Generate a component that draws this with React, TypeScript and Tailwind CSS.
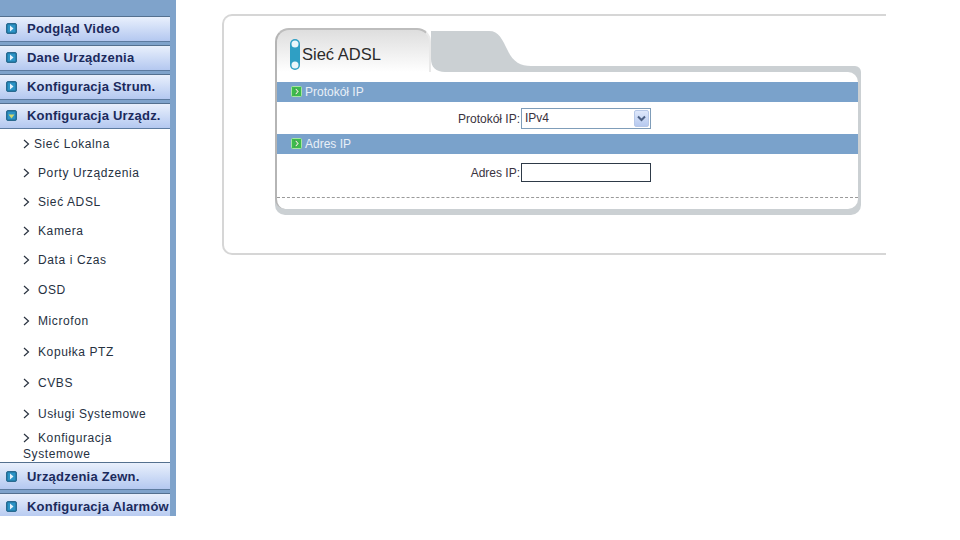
const menuTop = ["Podgląd Video", "Dane Urządzenia", "Konfiguracja Strum."];
const subItems = [
  { label: "Sieć Lokalna", gap: "mr-[4px]", h: "h-[29px]" },
  { label: "Porty Urządzenia", gap: "mr-[8px]", h: "h-[29px]" },
  { label: "Sieć ADSL", gap: "mr-[8px]", h: "h-[29px]" },
  { label: "Kamera", gap: "mr-[8px]", h: "h-[29px]" },
  { label: "Data i Czas", gap: "mr-[8px]", h: "h-[29px]" },
  { label: "OSD", gap: "mr-[8px]", h: "h-[31px]" },
  { label: "Microfon", gap: "mr-[8px]", h: "h-[31px]" },
  { label: "Kopułka PTZ", gap: "mr-[8px]", h: "h-[31px]" },
  { label: "CVBS", gap: "mr-[8px]", h: "h-[31px]" },
  { label: "Usługi Systemowe", gap: "mr-[8px]", h: "h-[31px]" },
];

const Chevron = ({ className }: { className: string }) => (
  <svg width="7" height="10" viewBox="0 0 7 10" className={className}>
    <path d="M1 1l4.5 4L1 9" fill="none" stroke="#2a3340" strokeWidth="1.2" />
  </svg>
);

const MenuIcon = ({ open }: { open?: boolean }) => (
  <svg width="11" height="11" viewBox="0 0 11 11" className="shrink-0 -mt-[2px]">
    <rect x="0.5" y="0.5" width="10" height="10" rx="1.5" fill="#1c6a94" stroke="#2a6a90" />
    <rect x="1.5" y="1.5" width="8" height="8" fill="#2b93c6" />
    {open ? (
      <path d="M2.5 4.5h6L5.5 8.5z" fill="#d2d86c" />
    ) : (
      <path d="M4 2.5l3.5 3L4 8.5z" fill="#e6f3fb" />
    )}
  </svg>
);

const MenuItem = ({ label, open, h }: { label: string; open?: boolean; h: string }) => (
  <div
    className={`${h} flex items-center pl-[6px] gap-[10px] w-[170px] bg-gradient-to-b from-[#e9f0fc] to-[#b4c8f0] border-t border-t-[#54708f] border-b border-b-[#5d7ba0] overflow-hidden`}
  >
    <MenuIcon open={open} />
    <span className="text-[13px] font-bold tracking-[0.22px] text-[#1b2a5c] whitespace-nowrap">{label}</span>
  </div>
);

const SectionBar = ({ title }: { title: string }) => (
  <div className="h-[20px] bg-[#7aa2cb] flex items-center pl-[14px] gap-[3px]">
    <svg width="11" height="11" viewBox="0 0 11 11" className="shrink-0 -mt-[2px]">
      <rect x="0.5" y="0.5" width="10" height="10" rx="1" fill="#3dbb4c" stroke="#a6e6a2" />
      <path d="M3.5 2.5h2l2.5 3-2.5 3h-2l2.5-3z" fill="#eef9dc" stroke="#1d7a2e" strokeWidth="0.5" />
    </svg>
    <span className="text-[12px] text-[#e8eff7]">{title}</span>
  </div>
);

export default function App() {
  return (
    <div className="w-[960px] h-[540px] bg-white flex items-start font-['Liberation_Sans',Arial,sans-serif] overflow-hidden">
      <aside className="w-[176px] h-[516px] shrink-0 bg-[#7fa3cb] pt-[16px] overflow-hidden">
        <div className="flex flex-col gap-[3px]">
          {menuTop.map((label) => (
            <MenuItem key={label} label={label} h="h-[26px]" />
          ))}
          <MenuItem label="Konfiguracja Urządz." open h="h-[26px]" />
        </div>
        <div className="w-[170px] h-[333px] bg-white text-[12px] tracking-[0.6px] text-[#26313f] pl-[23px]">
          {subItems.map((item) => (
            <div key={item.label} className={`${item.h} flex items-center whitespace-nowrap`}>
              <Chevron className={`${item.gap} shrink-0`} />
              <span>{item.label}</span>
            </div>
          ))}
          <div className="leading-[16px] pt-[1px]">
            <Chevron className="inline mr-[8px] -mt-[2px]" />
            Konfiguracja
            <br />
            Systemowe
          </div>
        </div>
        <div className="flex flex-col gap-[3px]">
          <MenuItem label="Urządzenia Zewn." h="h-[28px] pt-[2px]" />
          <MenuItem label="Konfiguracja Alarmów" h="h-[26px] pt-[2px]" />
        </div>
      </aside>

      <main className="pl-[46px] pt-[14px]">
        <div className="w-[664px] h-[241px] border-l-2 border-t-2 border-b-2 border-[#d6d6d6] rounded-l-[10px] pl-[51px] pt-[12px]">
          <div className="w-[586px]">
            <div className="flex h-[44px] items-stretch">
              <div className="w-[156px] shrink-0 flex items-center pl-[13px] pt-[6px] gap-[2px] rounded-t-[14px] border-t-2 border-l-2 border-r-2 border-t-[#bdbdbd] border-l-[#b5b5b5] border-r-[#e9e9e9] border-b-0 bg-gradient-to-b from-[#dedede] to-white">
                <svg width="10" height="31" viewBox="0 0 10 31" className="shrink-0">
                  <rect x="0" y="0" width="10" height="31" rx="5" fill="#2f9fc4" />
                  <circle cx="5" cy="5" r="3.5" fill="#eaf6fb" />
                  <circle cx="5" cy="26" r="3.5" fill="#eaf6fb" />
                </svg>
                <span className="text-[16.5px] text-[#2b2b2b]">Sieć ADSL</span>
              </div>
              <div className="flex-1 flex flex-col justify-end">
                <svg width="100" height="41" viewBox="0 0 100 41" className="block -mb-[6px]">
                  <path d="M0 0H58C68 0 71 8 77 20C82 31 90 35 100 35V41H14C5 41 0 36 0 28Z" fill="#cbd0d3" />
                </svg>
                <div className="h-[6px] ml-[14px] bg-[#cbd0d3] rounded-tr-[10px]" />
              </div>
            </div>
            <div className="bg-[#cbd0d3] pb-[6px] pr-[3px] rounded-b-[10px]">
              <div className="h-[137px] border-l-2 border-[#b5b5b5] pt-[10px] rounded-tr-[10px] rounded-b-[10px] bg-white">
                <SectionBar title="Protokół IP" />
                <div className="h-[32px] flex items-center gap-[1px] text-[12px] text-[#3a3340]">
                  <span className="w-[243px] text-right pt-[1px]">Protokół IP:</span>
                  <div className="w-[130px] h-[21px] border border-[#7f9db9] flex items-center justify-between pl-[3px] pr-[1px]">
                    <span>IPv4</span>
                    <div className="w-[15px] h-[17px] rounded-[2px] border border-[#b7c8e8] bg-gradient-to-b from-[#dfe8fb] to-[#b6c9ef] flex items-center justify-center">
                      <svg width="9" height="7" viewBox="0 0 9 7">
                        <path d="M1 1.5l3.5 3.5L8 1.5" fill="none" stroke="#4d6185" strokeWidth="2" />
                      </svg>
                    </div>
                  </div>
                </div>
                <SectionBar title="Adres IP" />
                <div className="h-[37px] flex items-center gap-[1px] text-[12px] text-[#3a3340]">
                  <span className="w-[243px] text-right">Adres IP:</span>
                  <input className="w-[130px] h-[19px] border border-[#2e3a48] bg-white outline-none" />
                </div>
                <div className="mt-[6px] border-t border-dashed border-[#9a9a9a]" />
              </div>
            </div>
          </div>
        </div>
      </main>
    </div>
  );
}
